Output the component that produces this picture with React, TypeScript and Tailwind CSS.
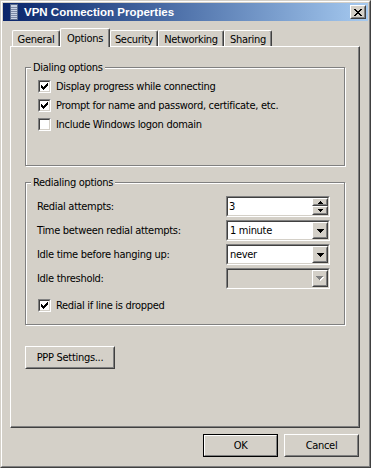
import React from "react";

const FONT = "font-['DejaVu_Sans_Condensed','Liberation_Sans',sans-serif]";

function Pixels({ w, h, rects, color }: { w: number; h: number; rects: number[][]; color: string }) {
  return (
    <svg width={w} height={h} viewBox={`0 0 ${w} ${h}`} shapeRendering="crispEdges">
      {rects.map((r, i) => (
        <rect key={i} x={r[0]} y={r[1]} width={r[2]} height={r[3] ?? 1} fill={color} />
      ))}
    </svg>
  );
}

const CHECK = [
  [6, 0, 1],
  [5, 1, 2],
  [0, 2, 1],
  [4, 2, 3],
  [0, 3, 2],
  [3, 3, 3],
  [0, 4, 5],
  [1, 5, 3],
  [2, 6, 1],
];

const DOWN = [
  [0, 0, 7],
  [1, 1, 5],
  [2, 2, 3],
  [3, 3, 1],
];

const SMALL_UP = [
  [2, 0, 1],
  [1, 1, 3],
  [0, 2, 5],
];
const SMALL_DOWN = [
  [0, 0, 5],
  [1, 1, 3],
  [2, 2, 1],
];

const XMARK = [
  [0, 0, 2], [6, 0, 2],
  [1, 1, 2], [5, 1, 2],
  [2, 2, 4],
  [3, 3, 2],
  [2, 4, 4],
  [1, 5, 2], [5, 5, 2],
  [0, 6, 2], [6, 6, 2],
];

function Raised({ className = "", children }: { className?: string; children?: React.ReactNode }) {
  return (
    <div className={`border border-t-white border-l-white border-r-[#404040] border-b-[#404040] bg-[#d4d0c8] ${className}`}>
      <div className="w-full h-full border border-t-[#d4d0c8] border-l-[#d4d0c8] border-r-[#808080] border-b-[#808080] flex items-center justify-center">
        {children}
      </div>
    </div>
  );
}

function Sunken({ className = "", bg = "bg-white", children }: { className?: string; bg?: string; children?: React.ReactNode }) {
  return (
    <div className={`border border-t-[#808080] border-l-[#808080] border-r-white border-b-white ${className}`}>
      <div className={`w-full h-full border border-t-[#404040] border-l-[#404040] border-r-[#d4d0c8] border-b-[#d4d0c8] ${bg}`}>
        {children}
      </div>
    </div>
  );
}

function CheckBox({ checked, label }: { checked: boolean; label: string }) {
  return (
    <div className="h-[19px] flex items-center pl-[1px]">
      <div className="w-[13px] h-[13px] shrink-0 border border-t-[#808080] border-l-[#808080] border-r-white border-b-white">
        <div className="w-full h-full border border-t-[#404040] border-l-[#404040] border-r-[#d4d0c8] border-b-[#d4d0c8] bg-white flex items-center justify-center">
          {checked && <Pixels w={7} h={7} rects={CHECK} color="#000" />}
        </div>
      </div>
      <span className="ml-[5px] leading-[13px] whitespace-nowrap">{label}</span>
    </div>
  );
}

function Combo({ value, disabled = false }: { value: string; disabled?: boolean }) {
  return (
    <Sunken className="w-[104px] h-[21px]" bg={disabled ? "bg-[#d4d0c8]" : "bg-white"}>
      <div className="flex h-full items-center">
        <span className="flex-1 pl-[2px] leading-[13px]">{value}</span>
        <Raised className="w-[16px] h-[17px]">
          {disabled ? (
            <div className="relative w-[8px] h-[5px]">
              <div className="absolute left-[1px] top-[1px]">
                <Pixels w={7} h={4} rects={DOWN} color="#fff" />
              </div>
              <div className="absolute left-0 top-0">
                <Pixels w={7} h={4} rects={DOWN} color="#808080" />
              </div>
            </div>
          ) : (
            <Pixels w={7} h={4} rects={DOWN} color="#000" />
          )}
        </Raised>
      </div>
    </Sunken>
  );
}

function Spin({ value }: { value: string }) {
  return (
    <Sunken className="w-[104px] h-[21px]">
      <div className="flex h-full items-center">
        <span className="flex-1 pl-[1px] leading-[13px]">{value}</span>
        <div className="flex flex-col w-[16px] h-[17px]">
          <Raised className="w-[16px] h-[8px]">
            <Pixels w={5} h={3} rects={SMALL_UP} color="#000" />
          </Raised>
          <Raised className="w-[16px] h-[9px]">
            <Pixels w={5} h={3} rects={SMALL_DOWN} color="#000" />
          </Raised>
        </div>
      </div>
    </Sunken>
  );
}

function Row({ label, children }: { label: string; children: React.ReactNode }) {
  return (
    <div className="h-[21px] flex items-center justify-between">
      <span className="leading-[13px] whitespace-nowrap">{label}</span>
      {children}
    </div>
  );
}

function Tab({ label, width, selected = false }: { label: string; width: string; selected?: boolean }) {
  if (selected) {
    return (
      <div
        className={`${width} h-[19px] mb-[-1px] relative z-10 bg-[#d4d0c8] border-t border-l border-r border-t-white border-l-white border-r-[#404040] rounded-tl-[2px] rounded-tr-[2px] shadow-[inset_-1px_0_0_#808080] flex justify-center pt-[3px] leading-[13px]`}
      >
        {label}
      </div>
    );
  }
  return (
    <div
      className={`${width} h-[16px] bg-[#d4d0c8] border-t border-l border-r border-t-white border-l-white border-r-[#404040] rounded-tl-[2px] rounded-tr-[2px] shadow-[inset_-1px_0_0_#808080] flex justify-center pt-[2px] leading-[13px]`}
    >
      {label}
    </div>
  );
}

function ServerIcon() {
  return (
    <svg width="8" height="16" viewBox="0 0 8 16" shapeRendering="crispEdges">
      <rect x="0" y="0" width="8" height="16" fill="#5a6b8c" />
      <rect x="1" y="1" width="6" height="14" fill="#c9d2e3" />
      <rect x="1" y="3" width="6" height="1" fill="#7d8aa6" />
      <rect x="1" y="5" width="6" height="1" fill="#7d8aa6" />
      <rect x="1" y="7" width="6" height="1" fill="#7d8aa6" />
      <rect x="1" y="9" width="6" height="1" fill="#7d8aa6" />
      <rect x="1" y="11" width="6" height="1" fill="#7d8aa6" />
      <rect x="1" y="13" width="6" height="1" fill="#7d8aa6" />
    </svg>
  );
}

export default function App() {
  return (
    <div className={`w-[371px] h-[468px] bg-[#d4d0c8] text-[11px] tracking-[-0.3px] text-black ${FONT}`}>
      <div className="h-full border border-t-[#d4d0c8] border-l-[#d4d0c8] border-r-[#404040] border-b-[#404040]">
        <div className="h-full border border-t-white border-l-white border-r-[#808080] border-b-[#808080] p-px flex flex-col">
          {/* Title bar */}
          <div className="h-[18px] shrink-0 flex items-center bg-gradient-to-r from-[#0a246a] to-[#a6caf0] pl-[7px] pr-[2px]">
            <ServerIcon />
            <span className="ml-[6px] flex-1 font-['Liberation_Sans',sans-serif] font-bold text-[11.5px] tracking-normal text-white leading-[14px] whitespace-nowrap">
              VPN Connection Properties
            </span>
            <Raised className="w-[16px] h-[14px]">
              <Pixels w={8} h={7} rects={XMARK} color="#000" />
            </Raised>
          </div>

          {/* Body */}
          <div className="flex-1 flex flex-col px-[7px] pt-[7px]">
            {/* Tabs */}
            <div className="h-[18px] flex items-end pl-[2px]">
              <Tab label="General" width="w-[48px]" />
              <Tab label="Options" width="w-[50px]" selected />
              <Tab label="Security" width="w-[48px]" />
              <Tab label="Networking" width="w-[66px]" />
              <Tab label="Sharing" width="w-[48px]" />
            </div>

            {/* Panel */}
            <div className="w-[350px] h-[382px] border border-t-white border-l-white border-r-[#404040] border-b-[#404040] shadow-[inset_-1px_-1px_0_#808080] pt-[14px] px-[14px] flex flex-col">
              {/* Dialing options */}
              <fieldset className="h-[105px] border border-[#808080] shadow-[inset_1px_1px_0_#fff,1px_1px_0_#fff] pl-[5px] pr-[5px] pt-[3px]">
                <legend className="px-[2px] leading-[13px] bg-[#d4d0c8]">Dialing options</legend>
                <div className="pl-[6px] flex flex-col">
                  <CheckBox checked label="Display progress while connecting" />
                  <CheckBox checked label="Prompt for name and password, certificate, etc." />
                  <CheckBox checked={false} label="Include Windows logon domain" />
                </div>
              </fieldset>

              {/* Redialing options */}
              <fieldset className="mt-[10px] h-[149px] border border-[#808080] shadow-[inset_1px_1px_0_#fff,1px_1px_0_#fff] pl-[5px] pr-[5px] pt-[7px]">
                <legend className="px-[2px] leading-[13px] bg-[#d4d0c8]">Redialing options</legend>
                <div className="pl-[6px] pr-[9px] flex flex-col gap-[3px]">
                  <Row label="Redial attempts:">
                    <Spin value="3" />
                  </Row>
                  <Row label="Time between redial attempts:">
                    <Combo value="1 minute" />
                  </Row>
                  <Row label="Idle time before hanging up:">
                    <Combo value="never" />
                  </Row>
                  <Row label="Idle threshold:">
                    <Combo value="" disabled />
                  </Row>
                </div>
                <div className="pl-[6px] mt-[7px]">
                  <CheckBox checked label="Redial if line is dropped" />
                </div>
              </fieldset>

              <div className="mt-[21px]">
                <Raised className="w-[90px] h-[23px]">
                  <span className="leading-[13px]">PPP Settings...</span>
                </Raised>
              </div>
            </div>

            {/* Bottom buttons */}
            <div className="mt-[6px] flex justify-end gap-[6px] pr-[2px]">
              <div className="w-[75px] h-[23px] border border-black">
                <div className="w-full h-full border border-t-white border-l-white border-r-[#808080] border-b-[#808080] flex items-center justify-center leading-[13px]">
                  OK
                </div>
              </div>
              <Raised className="w-[75px] h-[23px]">
                <span className="leading-[13px]">Cancel</span>
              </Raised>
            </div>
          </div>
        </div>
      </div>
    </div>
  );
}
